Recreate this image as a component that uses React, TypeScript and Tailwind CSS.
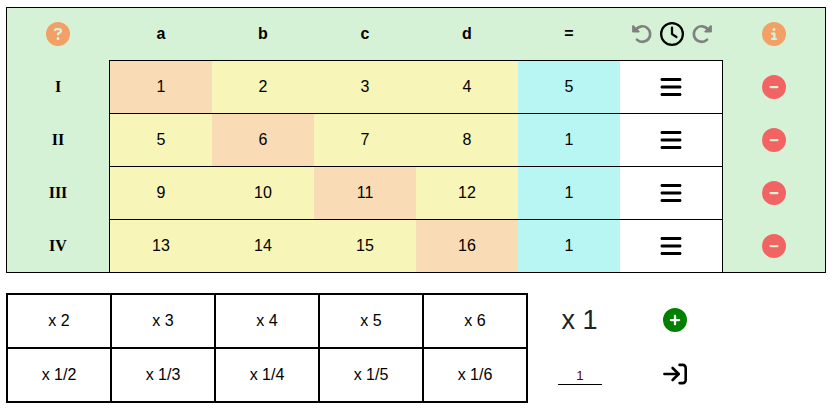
import type { ReactNode } from "react";
import { FaBars, FaCircleInfo, FaCircleMinus, FaCirclePlus, FaCircleQuestion, FaRegClock } from "react-icons/fa6";

const rows = [
  { name: "I", values: [1, 2, 3, 4], result: 5 },
  { name: "II", values: [5, 6, 7, 8], result: 1 },
  { name: "III", values: [9, 10, 11, 12], result: 1 },
  { name: "IV", values: [13, 14, 15, 16], result: 1 },
];

const factors = ["x 2", "x 3", "x 4", "x 5", "x 6", "x 1/2", "x 1/3", "x 1/4", "x 1/5", "x 1/6"];

function Cell({ className = "", children }: { className?: string; children: ReactNode }) {
  return <div className={`flex w-[102px] items-center justify-center ${className}`}>{children}</div>;
}

function UndoIcon({ className = "" }: { className?: string }) {
  return (
    <svg
      width="24"
      height="24"
      viewBox="0 0 24 24"
      fill="none"
      stroke="#808080"
      strokeLinecap="round"
      strokeLinejoin="round"
      className={className}
    >
      <path d="M6 7.6A7.8 7.8 0 1 1 6.9 17.6" strokeWidth="2.7" />
      <path d="M3.1 4.1V9.6H8.7Z" fill="#808080" strokeWidth="2" />
    </svg>
  );
}

function EnterIcon() {
  return (
    <svg
      width="24"
      height="24"
      viewBox="0 0 24 24"
      fill="none"
      stroke="currentColor"
      strokeWidth="2.6"
      strokeLinecap="round"
      strokeLinejoin="round"
    >
      <path d="M1.4 12H15.5" />
      <path d="M9.6 6L15.7 12L9.6 18" />
      <path d="M16.6 2.9H19.7a3 3 0 0 1 3 3v12.2a3 3 0 0 1-3 3H16.6" />
    </svg>
  );
}

export default function App() {
  return (
    <main className="h-[414px] w-[836px] overflow-hidden bg-white pt-[7px] pl-[6px] font-['Liberation_Sans',Arial,sans-serif] text-[16px] leading-[18px] text-black">
      <section className="w-[820px] border border-black bg-[#d6f2d6]">
        <div className="flex h-[52px] font-bold">
          <Cell className="mr-px">
            <FaCircleQuestion size={24} color="#f2a065" />
          </Cell>
          {["a", "b", "c", "d", "="].map((label) => (
            <Cell key={label}>{label}</Cell>
          ))}
          <Cell className="mr-px gap-[6px] pl-[2px]">
            <UndoIcon />
            <FaRegClock size={24} />
            <UndoIcon className="-scale-x-100" />
          </Cell>
          <Cell>
            <FaCircleInfo size={24} color="#f2a065" />
          </Cell>
        </div>
        {rows.map((row, r) => (
          <div key={row.name} className="flex h-[53px]">
            <Cell className="pt-px font-['Liberation_Serif','Times_New_Roman',serif] font-bold">{row.name}</Cell>
            <div className="flex border-x border-t border-black">
              {row.values.map((value, c) => (
                <Cell key={value} className={r === c ? "bg-[#f9dcb6]" : "bg-[#f7f5b7]"}>
                  {value}
                </Cell>
              ))}
              <Cell className="bg-[#b8f6f4]">{row.result}</Cell>
              <Cell className="bg-white">
                <FaBars size={24} />
              </Cell>
            </div>
            <Cell className="pt-px">
              <FaCircleMinus size={24} color="#f26363" />
            </Cell>
          </div>
        ))}
      </section>

      <section className="mt-5 flex">
        <div className="grid h-[110px] w-[522px] grid-cols-[repeat(5,102px)] grid-rows-[52px_52px] gap-[2px] border-2 border-black bg-black">
          {factors.map((factor) => (
            <div key={factor} className="flex items-center justify-center bg-white">
              {factor}
            </div>
          ))}
        </div>
        <div className="flex w-[104px] flex-col items-center">
          <div className="flex h-[54px] items-center pr-px text-[27px] text-[#222]">x 1</div>
          <div className="flex h-[54px] items-center pt-[2px]">
            <input
              defaultValue="1"
              className="h-[20px] w-[44px] border-b border-black bg-transparent pt-[2px] text-center text-[13.33px] text-[#600000] outline-none"
            />
          </div>
        </div>
        <div className="flex w-[86px] flex-col items-center">
          <div className="flex h-[54px] items-center">
            <FaCirclePlus size={24} color="#008000" />
          </div>
          <div className="flex h-[54px] items-center">
            <EnterIcon />
          </div>
        </div>
      </section>
    </main>
  );
}
